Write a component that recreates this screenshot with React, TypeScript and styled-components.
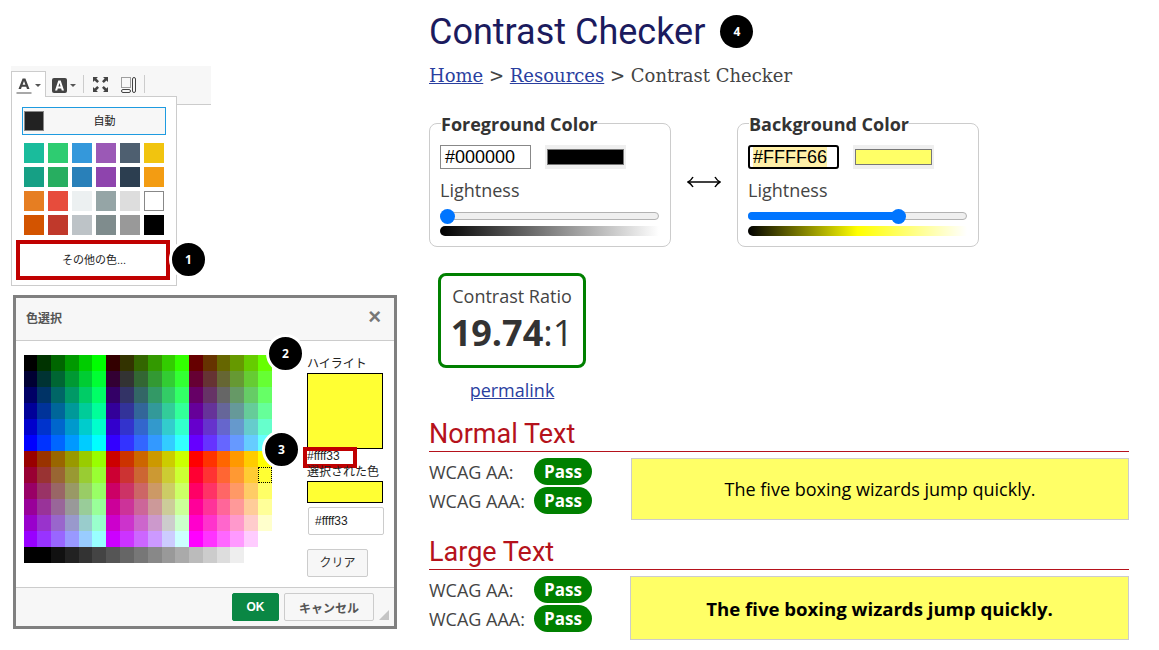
import React from 'react';
import styled, { createGlobalStyle } from 'styled-components';

const CJK = `'Liberation Sans', 'Noto Sans CJK JP', sans-serif`;
const OPEN = `'Open Sans', sans-serif`;

const GlobalStyle = createGlobalStyle`
  html, body {
    margin: 0;
    padding: 0;
    background: #fff;
  }
  * {
    box-sizing: border-box;
  }
`;

const Page = styled.div`
  display: flex;
  width: 1159px;
  height: 650px;
  overflow: hidden;
  font-family: ${OPEN};
  color: #333;
`;

const LeftColumn = styled.div`
  width: 429px;
  flex: none;
  padding-top: 66px;
  font-family: ${CJK};
`;

const Toolbar = styled.div`
  display: flex;
  align-items: flex-start;
  width: 200px;
  height: 39px;
  margin-left: 11px;
  padding-top: 5px;
  background: #f7f7f7;
  border-bottom: 1px solid #ccc;
`;

const ToolButton = styled.div<{ $open?: boolean }>`
  display: flex;
  align-items: center;
  justify-content: center;
  gap: 3px;
  width: 35px;
  height: 26px;
  padding-top: 2px;
  background: ${p => (p.$open ? '#fff' : 'transparent')};
  border: 1px solid ${p => (p.$open ? '#ccc' : 'transparent')};
  border-bottom: none;
  position: relative;
  z-index: 2;
`;

const Caret = styled.span`
  width: 0;
  height: 0;
  border-left: 3px solid transparent;
  border-right: 3px solid transparent;
  border-top: 3px solid #555;
`;

const ToolSeparator = styled.span`
  width: 1px;
  height: 18px;
  margin: 4px 2px 0 2px;
  background: #ccc;
`;

const ToolIcon = styled.div`
  display: flex;
  justify-content: center;
  width: 28px;
  padding-top: 6px;
`;

const ColorMenu = styled.div`
  position: relative;
  z-index: 1;
  width: 166px;
  height: 190px;
  margin: -9px 0 0 11px;
  padding: 10px 5px 0 4px;
  background: #fff;
  border: 1px solid #ccc;
`;

const AutoButton = styled.div`
  display: flex;
  align-items: center;
  width: 144px;
  height: 28px;
  margin-left: 6px;
  padding-left: 1px;
  background: #f7f7f7;
  border: 1px solid #1e9be0;
  font-size: 11px;
  color: #222;
`;

const AutoSwatch = styled.span`
  width: 20px;
  height: 20px;
  background: #222;
  border: 1px solid #888;
`;

const AutoLabel = styled.span`
  flex: 1;
  padding-bottom: 2px;
  text-align: center;
`;

const SwatchGrid = styled.div`
  display: grid;
  grid-template-columns: repeat(6, 20px);
  grid-auto-rows: 20px;
  gap: 4px;
  margin: 8px 0 0 8px;
`;

const MenuSwatch = styled.span<{ $color: string; $outlined?: boolean }>`
  background: ${p => p.$color};
  border: ${p => (p.$outlined ? '1px solid #888' : 'none')};
`;

const MoreColors = styled.div`
  position: relative;
  display: flex;
  align-items: center;
  justify-content: center;
  width: 154px;
  height: 40px;
  margin: 5px 0 0 0;
  padding: 0 0 2px 2px;
  border: 4px solid #c00000;
  font-size: 11px;
  color: #222;
`;

const Badge = styled.span`
  position: absolute;
  display: flex;
  align-items: center;
  justify-content: center;
  width: 39px;
  height: 39px;
  background: #000;
  border: 3px solid #fff;
  border-radius: 50%;
  color: #fff;
  font: 700 12px ${OPEN};
`;

const MenuBadge = styled(Badge)`
  left: 149px;
  top: -4px;
`;

const Dialog = styled.div`
  position: relative;
  width: 384px;
  height: 334px;
  margin: 9px 0 0 13px;
  border: 3px solid #808080;
  background: #fff;
`;

const DialogHeader = styled.div`
  display: flex;
  align-items: center;
  justify-content: space-between;
  height: 43px;
  padding: 0 13px 4px 10px;
  background: #f7f7f7;
  border-bottom: 1px solid #ccc;
  font-size: 12px;
  font-weight: 700;
  color: #555;
`;

const CloseIcon = styled.span`
  font: 700 22px/22px 'Liberation Sans', sans-serif;
  color: #777;
`;

const DialogBody = styled.div`
  display: flex;
  height: 246px;
  padding: 14px 0 0 8px;
`;

const Palette = styled.div`
  display: grid;
  grid-template-columns: 13px 14px 14px 14px 13px 14px 14px 14px 14px 14px 13px 14px 14px 14px 13px 14px 14px 14px;
  grid-auto-rows: 16px;
  width: 248px;
  height: 208px;
`;

const PaletteCell = styled.span<{ $selected?: boolean }>`
  border: ${p => (p.$selected ? '1px dotted #000' : 'none')};
`;

const SidePanel = styled.div`
  position: relative;
  width: 80px;
  margin-left: 35px;
  padding-top: 1px;
  font-size: 12px;
  line-height: 17px;
  color: #222;
`;

const Preview = styled.div<{ $height: number }>`
  width: 76px;
  height: ${p => p.$height}px;
  background: #ffff33;
  border: 1px solid #000;
`;

const HexBox = styled.div`
  width: 54px;
  height: 21px;
  margin: -2px 0 0 -4px;
  border: 4px solid #c00000;
  border-radius: 0;
  font-size: 12px;
  line-height: 11px;
  position: relative;
`;

const SelectedLabel = styled.div`
  height: 16px;
  margin-top: -3px;
  line-height: 14px;
  position: relative;
`;

const HexInput = styled.div`
  width: 76px;
  height: 28px;
  margin: 4px 0 0 1px;
  padding-left: 6px;
  border: 1px solid #ccc;
  border-radius: 2px;
  font-size: 12px;
  line-height: 26px;
`;

const ActionButton = styled.div`
  display: flex;
  align-items: center;
  justify-content: center;
  height: 28px;
  background: #f7f7f7;
  border: 1px solid #ccc;
  border-radius: 2px;
  font-size: 12px;
  color: #333;
`;

const ClearButton = styled(ActionButton)`
  width: 61px;
  margin-top: 14px;
`;

const CancelButton = styled(ActionButton)`
  width: 90px;
  font-weight: 700;
  color: #555;
`;

const OkButton = styled(ActionButton)`
  width: 47px;
  background: #0a8744;
  border-color: #0a8744;
  color: #fff;
  font-weight: 700;
`;

const DialogFooter = styled.div`
  display: flex;
  justify-content: flex-end;
  gap: 5px;
  height: 39px;
  padding: 5px 20px 0 0;
  background: #f7f7f7;
  border-top: 1px solid #ccc;
`;

const ResizeGrip = styled.span`
  position: absolute;
  right: 5px;
  bottom: 6px;
  width: 0;
  height: 0;
  border-left: 10px solid transparent;
  border-bottom: 10px solid #c4c4c4;
`;

const BadgeTwo = styled(Badge)`
  left: 250px;
  top: 36px;
`;

const BadgeThree = styled(Badge)`
  left: 246px;
  top: 132px;
`;

const RightColumn = styled.div`
  width: 700px;
  flex: none;
`;

const TitleRow = styled.div`
  display: flex;
  align-items: center;
  gap: 12px;
  height: 46px;
  margin-top: 9px;
`;

const Title = styled.h1`
  margin: 0;
  font: 400 36px/46px Roboto, sans-serif;
  color: #1b1b5e;
`;

const TitleBadge = styled.span`
  display: flex;
  align-items: center;
  justify-content: center;
  width: 33px;
  height: 33px;
  margin: -2px 0 0 3px;
  background: #000;
  border-radius: 50%;
  color: #fff;
  font: 700 12px ${OPEN};
`;

const Breadcrumb = styled.div`
  margin-top: 8px;
  font: 400 18px/26px 'DejaVu Serif', serif;
  color: #444;
`;

const Anchor = styled.a`
  color: #2a3f9f;
  text-decoration: underline;
`;

const PickerRow = styled.div`
  display: flex;
  align-items: center;
  margin-top: 23px;
`;

const PickerSet = styled.fieldset`
  width: 242px;
  height: 135px;
  margin: 0;
  padding: 0 10px;
  border: 1px solid #ccc;
  border-radius: 8px;
`;

const PickerLegend = styled.legend`
  padding: 2px 0 0 0;
  margin-left: 1px;
  font: 700 18px/20px ${OPEN};
  color: #333;
`;

const SwapArrow = styled.div`
  display: flex;
  justify-content: center;
  width: 66px;
  padding-top: 5px;
`;

const FieldRow = styled.div`
  display: flex;
  align-items: center;
  gap: 14px;
  margin-top: 11px;
`;

const HexField = styled.div<{ $focused?: boolean }>`
  width: 91px;
  height: 24px;
  padding-left: ${p => (p.$focused ? 3 : 4)}px;
  border: ${p => (p.$focused ? '2px solid #000' : '1px solid #888')};
  border-radius: ${p => (p.$focused ? 3 : 0)}px;
  font: 400 18px/${p => (p.$focused ? 20 : 22)}px 'Liberation Sans', sans-serif;
  color: #000;
`;

const SelectedText = styled.span`
  display: inline-block;
  height: 20px;
  background: #fff0a8;
`;

const ColorWell = styled.div`
  display: flex;
  width: 81px;
  height: 24px;
  padding: 4px 2px;
  background: #efefef;
`;

const ColorFill = styled.div<{ $color: string }>`
  flex: 1;
  background: ${p => p.$color};
  border: 1px solid #777;
`;

const Lightness = styled.div`
  margin-top: 9px;
  font: 400 18px/24px ${OPEN};
  color: #444;
`;

const SliderTrack = styled.div`
  position: relative;
  width: 219px;
  height: 8px;
  margin-top: 10px;
  background: #efefef;
  border: 1px solid #b2b2b2;
  border-radius: 4px;
`;

const SliderFill = styled.div`
  position: absolute;
  left: -1px;
  top: -1px;
  height: 8px;
  background: #0075ff;
  border-radius: 4px;
`;

const SliderThumb = styled.div`
  position: absolute;
  top: -4.5px;
  width: 15px;
  height: 15px;
  margin-left: -8px;
  background: #0075ff;
  border-radius: 50%;
`;

const GradientBar = styled.div<{ $stops: string }>`
  width: 219px;
  height: 10px;
  margin-top: 6px;
  border-radius: 5px 0 0 5px;
  background: linear-gradient(to right, ${p => p.$stops});
`;

const RatioCard = styled.div`
  display: flex;
  flex-direction: column;
  align-items: center;
  width: 148px;
  height: 95px;
  margin: 26px 0 0 9px;
  padding-top: 8px;
  border: 3px solid #008000;
  border-radius: 8px;
`;

const RatioLabel = styled.div`
  font: 400 18px/24px ${OPEN};
  color: #444;
`;

const RatioValue = styled.div`
  margin-top: 1px;
  font: 400 36px/48px ${OPEN};
  color: #333;
  b {
    font-weight: 700;
  }
`;

const Permalink = styled(Anchor)`
  display: block;
  width: 148px;
  margin: 10px 0 0 9px;
  text-align: center;
  font: 400 18px/24px ${OPEN};
`;

const SectionTitle = styled.h2<{ $gap: number }>`
  height: 35px;
  margin: ${p => p.$gap}px 0 0 0;
  border-bottom: 1px solid #b5121b;
  font: 400 27px/34px Roboto, sans-serif;
  color: #b5121b;
`;

const ResultRow = styled.div`
  display: flex;
  margin-top: 6px;
`;

const ResultList = styled.div`
  width: 202px;
  flex: none;
`;

const ResultLine = styled.div`
  display: flex;
  align-items: flex-start;
  height: 29px;
  font: 400 18px/27px ${OPEN};
  color: #444;
`;

const ResultName = styled.span`
  width: 105px;
  padding-top: 1px;
`;

const PassPill = styled.span`
  display: flex;
  align-items: center;
  justify-content: center;
  width: 58px;
  height: 27px;
  background: #008000;
  border-radius: 14px;
  color: #fff;
  font: 700 17px/27px ${OPEN};
`;

const SampleBox = styled.div<{ $large?: boolean }>`
  display: flex;
  align-items: center;
  justify-content: center;
  flex: 1;
  height: ${p => (p.$large ? 64 : 62)}px;
  margin-left: ${p => (p.$large ? -1 : 0)}px;
  background: #ffff66;
  border: 1px solid #ccc;
  color: #000;
  font: ${p => (p.$large ? '700 18.6px' : '400 18px')} ${OPEN};
`;

const MENU_COLORS = [
  '#1abc9c', '#2ecc71', '#3498db', '#9b59b6', '#4e5f70', '#f1c40f',
  '#16a085', '#27ae60', '#2980b9', '#8e44ad', '#2c3e50', '#f39c12',
  '#e67e22', '#e74c3c', '#ecf0f1', '#95a5a6', '#dddddd', '#ffffff',
  '#d35400', '#c0392b', '#bdc3c7', '#7f8c8d', '#999999', '#000000',
];

const hex = (n: number) => (n * 0x33).toString(16).padStart(2, '0');

// web-safe table: two banks of three reds, green across, blue down
const paletteCells: string[] = [];
for (let bank = 0; bank < 2; bank++) {
  for (let blue = 0; blue < 6; blue++) {
    for (let red = 0; red < 3; red++) {
      for (let green = 0; green < 6; green++) {
        paletteCells.push(`#${hex(red + bank * 3)}${hex(green)}${hex(blue)}`);
      }
    }
  }
}
const GRAYS = ['000', '000', '111', '222', '333', '444', '555', '666', '777', '888', '999', 'aaa', 'bbb', 'ccc', 'ddd', 'eee', 'fff', 'fff'];

const TextColorIcon = () => (
  <svg width='16' height='18' viewBox='0 0 16 18'>
    <path d='M2.5 12 L6.6 1.5 H9.4 L13.5 12 H11 L10.2 9.8 H5.8 L5 12 Z M6.6 7.8 H9.4 L8 4 Z' fill='#444' fillRule='evenodd' />
    <rect x='0.5' y='15' width='15' height='2' fill='#a8a8a8' />
  </svg>
);

const BackColorIcon = () => (
  <svg width='15' height='15' viewBox='0 0 15 15'>
    <rect width='15' height='15' rx='2' fill='#444' />
    <path d='M3 12.5 L6.3 2.5 H8.7 L12 12.5 H9.8 L9.2 10.5 H5.8 L5.2 12.5 Z M6.4 8.6 H8.6 L7.5 5 Z' fill='#fff' fillRule='evenodd' />
  </svg>
);

const FullscreenIcon = () => (
  <svg width='15' height='15' viewBox='0 0 15 15' fill='#444'>
    <path d='M0 0 H5 L3.4 1.6 L6 4.2 L4.2 6 L1.6 3.4 L0 5 Z' />
    <path d='M15 0 V5 L13.4 3.4 L10.8 6 L9 4.2 L11.6 1.6 L10 0 Z' />
    <path d='M0 15 V10 L1.6 11.6 L4.2 9 L6 10.8 L3.4 13.4 L5 15 Z' />
    <path d='M15 15 H10 L11.6 13.4 L9 10.8 L10.8 9 L13.4 11.6 L15 10 Z' />
  </svg>
);

const PreviewIcon = () => (
  <svg width='15' height='16' viewBox='0 0 15 16' fill='none' stroke='#444'>
    <rect x='0.5' y='0.5' width='9' height='10' strokeDasharray='1 1' />
    <rect x='11.5' y='0.5' width='3' height='15' rx='1.5' />
    <rect x='0.5' y='12.5' width='9' height='3' rx='1.5' />
  </svg>
);

const SwapIcon = () => (
  <svg width='34' height='12' viewBox='0 0 34 12' fill='none' stroke='#000' strokeWidth='1.5'>
    <path d='M1 6 H33' />
    <path d='M6 1 Q4 4.5 1 6 Q4 7.5 6 11' />
    <path d='M28 1 Q30 4.5 33 6 Q30 7.5 28 11' />
  </svg>
);

const Result = ({ name }: { name: string }) => (
  <ResultLine>
    <ResultName>{name}</ResultName>
    <PassPill>Pass</PassPill>
  </ResultLine>
);

const Slider = ({ left }: { left: number }) => (
  <SliderTrack>
    {left > 8 && <SliderFill style={{ width: left }} />}
    <SliderThumb style={{ left }} />
  </SliderTrack>
);

const App = () => (
  <Page>
    <GlobalStyle />
    <LeftColumn>
      <Toolbar>
        <ToolButton $open>
          <TextColorIcon />
          <Caret />
        </ToolButton>
        <ToolButton>
          <BackColorIcon />
          <Caret />
        </ToolButton>
        <ToolSeparator />
        <ToolIcon>
          <FullscreenIcon />
        </ToolIcon>
        <ToolIcon>
          <PreviewIcon />
        </ToolIcon>
        <ToolSeparator />
      </Toolbar>
      <ColorMenu>
        <AutoButton>
          <AutoSwatch />
          <AutoLabel>自動</AutoLabel>
        </AutoButton>
        <SwatchGrid>
          {MENU_COLORS.map((c, i) => (
            <MenuSwatch key={i} $color={c} $outlined={c === '#ffffff'} />
          ))}
        </SwatchGrid>
        <MoreColors>
          その他の色...
          <MenuBadge>1</MenuBadge>
        </MoreColors>
      </ColorMenu>
      <Dialog>
        <DialogHeader>
          色選択
          <CloseIcon>×</CloseIcon>
        </DialogHeader>
        <DialogBody>
          <Palette>
            {paletteCells.map((c, i) => (
              <PaletteCell key={i} style={{ background: c }} $selected={c === '#ffff33'} />
            ))}
            {GRAYS.map((g, i) => (
              <PaletteCell key={i} style={{ background: `#${g}` }} />
            ))}
          </Palette>
          <SidePanel>
            ハイライト
            <Preview $height={76} />
            <HexBox>#ffff33</HexBox>
            <SelectedLabel>選択された色</SelectedLabel>
            <Preview $height={22} />
            <HexInput>#ffff33</HexInput>
            <ClearButton>クリア</ClearButton>
          </SidePanel>
        </DialogBody>
        <DialogFooter>
          <OkButton>OK</OkButton>
          <CancelButton>キャンセル</CancelButton>
        </DialogFooter>
        <ResizeGrip />
        <BadgeTwo>2</BadgeTwo>
        <BadgeThree>3</BadgeThree>
      </Dialog>
    </LeftColumn>
    <RightColumn>
      <TitleRow>
        <Title>Contrast Checker</Title>
        <TitleBadge>4</TitleBadge>
      </TitleRow>
      <Breadcrumb>
        <Anchor>Home</Anchor> &gt; <Anchor>Resources</Anchor> &gt; Contrast Checker
      </Breadcrumb>
      <PickerRow>
        <PickerSet>
          <PickerLegend>Foreground Color</PickerLegend>
          <FieldRow>
            <HexField>#000000</HexField>
            <ColorWell>
              <ColorFill $color='#000' />
            </ColorWell>
          </FieldRow>
          <Lightness>Lightness</Lightness>
          <Slider left={7} />
          <GradientBar $stops='#000, #fff' />
        </PickerSet>
        <SwapArrow>
          <SwapIcon />
        </SwapArrow>
        <PickerSet>
          <PickerLegend>Background Color</PickerLegend>
          <FieldRow>
            <HexField $focused>
              <SelectedText>#FFFF66</SelectedText>
            </HexField>
            <ColorWell>
              <ColorFill $color='#ffff66' />
            </ColorWell>
          </FieldRow>
          <Lightness>Lightness</Lightness>
          <Slider left={150} />
          <GradientBar $stops='#000, #ff0 50%, #fff' />
        </PickerSet>
      </PickerRow>
      <RatioCard>
        <RatioLabel>Contrast Ratio</RatioLabel>
        <RatioValue>
          <b>19.74</b>:1
        </RatioValue>
      </RatioCard>
      <Permalink>permalink</Permalink>
      <SectionTitle $gap={15}>Normal Text</SectionTitle>
      <ResultRow>
        <ResultList>
          <Result name='WCAG AA:' />
          <Result name='WCAG AAA:' />
        </ResultList>
        <SampleBox>The five boxing wizards jump quickly.</SampleBox>
      </ResultRow>
      <SectionTitle $gap={15}>Large Text</SectionTitle>
      <ResultRow>
        <ResultList>
          <Result name='WCAG AA:' />
          <Result name='WCAG AAA:' />
        </ResultList>
        <SampleBox $large>The five boxing wizards jump quickly.</SampleBox>
      </ResultRow>
    </RightColumn>
  </Page>
);

export default App;
